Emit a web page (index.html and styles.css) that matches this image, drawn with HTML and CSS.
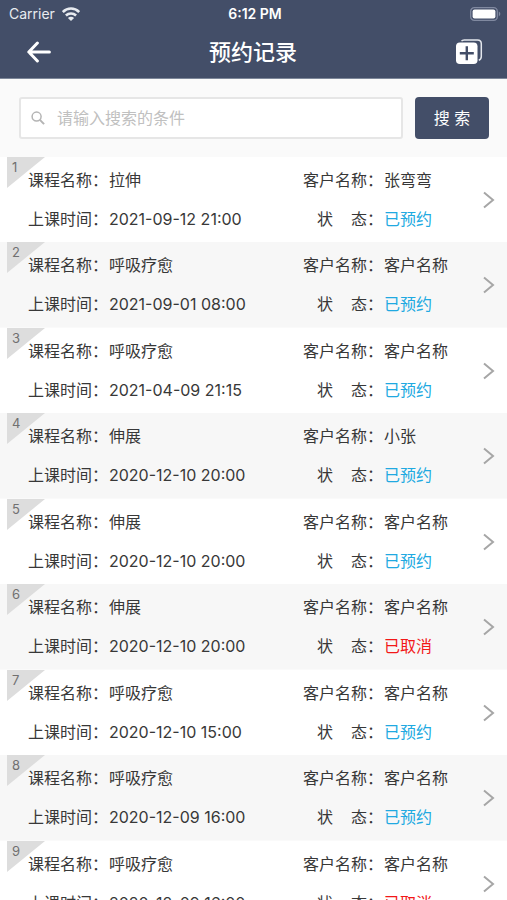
FILE: index.html
```html
<!DOCTYPE html>
<html lang="zh-CN">
<head>
<meta charset="utf-8">
<meta name="viewport" content="width=device-width, initial-scale=1">
<title>预约记录</title>
<link rel="stylesheet" href="styles.css">
</head>
<body>
<header class="top">
  <div class="status">
    <div class="carrier">
      <span>Carrier</span>
      <svg width="18" height="14" viewBox="0 0 18 14" fill="none" stroke="currentColor" stroke-width="2.6" aria-hidden="true">
        <path d="M.8 5C5.500.4 12.500.4 17.200 5M3.900 8.500c2.900-2.700 7.300-2.700 10.200 0"/>
        <path d="M9 14 5.900 11c1.800-1.600 4.400-1.600 6.200 0z" fill="currentColor" stroke="none"/>
      </svg>
    </div>
    <time class="clock">6:12 PM</time>
    <svg class="battery" width="31" height="14" viewBox="0 0 31 14" aria-hidden="true">
      <rect x=".7" y=".7" width="26.600" height="12.600" rx="3.600" fill="none" stroke="#8089a0" stroke-width="1.300"/>
      <rect x="2.600" y="2.400" width="22.800" height="9.200" rx="2" fill="#fff"/>
      <path d="M28.800 4.600c2 .9 2 3.900 0 4.800z" fill="#8089a0"/>
    </svg>
  </div>
  <nav class="bar">
    <button class="icon" type="button" aria-label="返回">
      <svg width="24" height="22" viewBox="0 0 24 22" fill="none" stroke="currentColor" stroke-width="3" stroke-linecap="round" stroke-linejoin="round">
        <path d="M10.400 2 1.800 11l8.600 9M2 11h20.400"/>
      </svg>
    </button>
    <h1>预约记录</h1>
    <button class="icon" type="button" aria-label="新增">
      <svg width="28" height="26" viewBox="0 0 28 26" fill="none">
        <path d="M6.500 2.200C7.100 1.300 8 1 9.200 1H22.500Q26.300 1 26.300 4.800V17.500C26.300 19.600 25.300 20.700 23.800 21.200" stroke="#e4e7ed" stroke-width="1.500"/>
        <rect x="1" y="3.500" width="21.500" height="21.500" rx="3.800" fill="#fff"/>
        <path d="M11.800 7.300v14M4.800 14.300h14" stroke="#434e68" stroke-width="2.400"/>
      </svg>
    </button>
  </nav>
</header>
<form class="search">
  <div class="field">
    <svg width="14" height="14" viewBox="0 0 14 14" fill="none" stroke="#b4b4b4" stroke-width="1.500" aria-hidden="true">
      <circle cx="5.600" cy="5.600" r="4.500"/><path d="m8.900 8.900 4.200 4.200" stroke-width="2"/>
    </svg>
    <input type="text" aria-label="搜索条件" placeholder="请输入搜索的条件">
  </div>
  <button class="submit" type="button">搜 索</button>
</form>
<main class="list" id="list"></main>
<script src="app.js"></script>
</body>
</html>
```
FILE: styles.css
```css
* { box-sizing: border-box; }

body {
  margin: 0;
  height: 100vh;
  display: flex;
  flex-direction: column;
  overflow: hidden;
  background: #fff;
  color: #383838;
  font: 16px/24px Inter, "Noto Sans CJK SC", sans-serif;
}

button, input { font: inherit; }

svg { display: block; flex: none; }

.top {
  flex: none;
  background: #434e68;
  color: #fff;
  border-bottom: 1px solid #7d8799;
}

.status {
  display: grid;
  grid-template-columns: 1fr auto 1fr;
  align-items: center;
  height: 27px;
  padding: 0 6px 0 9px;
  font-size: 14px;
  line-height: 27px;
}

.carrier {
  display: flex;
  align-items: center;
  gap: 7px;
  color: #e8ebf0;
}

.clock { font-weight: 600; }

.battery { justify-self: end; }

.bar {
  display: flex;
  align-items: center;
  justify-content: space-between;
  height: 51px;
  padding: 0 24px 2px 27px;
}

.icon {
  padding: 0;
  border: 0;
  background: none;
  color: inherit;
}

h1 {
  margin: 0;
  font-size: 22px;
  line-height: 32px;
  font-weight: 500;
}

.search {
  flex: none;
  display: flex;
  gap: 12px;
  padding: 18px 18px 18px 19px;
  background: #fafafa;
}

.field {
  flex: 1;
  display: flex;
  align-items: center;
  gap: 12px;
  height: 42px;
  padding: 0 10px;
  border: 2px solid #e6e6e6;
  border-radius: 3px;
  background: #fff;
}

.field input {
  flex: 1;
  min-width: 0;
  padding: 0;
  border: 0;
  outline: 0;
  background: none;
}

.field input::placeholder { color: #c0c0c0; opacity: 1; }

.submit {
  width: 74px;
  height: 42px;
  padding: 0;
  border: 0;
  border-radius: 4px;
  background: #434e68;
  color: #fff;
}

.list {
  flex: 1;
  min-height: 0;
  overflow-y: auto;
  scrollbar-width: none;
}

.row {
  position: relative;
  display: grid;
  grid-template-columns: minmax(0, 1fr) 180px 12px;
  align-items: center;
  padding: 11px 12px 11px 28px;
  color: inherit;
  text-decoration: none;
}

.row:nth-child(even) {
  background: #f7f7f7;
  border-bottom: 1px solid #fafafa;
}

.number {
  position: absolute;
  top: 0;
  left: 7px;
  width: 38px;
  height: 31px;
  padding-left: 5px;
  background: #ddd;
  clip-path: polygon(0 0, 100% 0, 0 100%);
  color: #707070;
  font-size: 13px;
  line-height: 20px;
}

.facts {
  display: grid;
  grid-template-columns: 81px minmax(0, 1fr);
  row-gap: 15px;
  margin: 0;
}

.facts dt { justify-self: end; padding-right: 1px; white-space: nowrap; }
.facts dd { margin: 0; white-space: nowrap; }
.spaced { display: flex; gap: 18px; }
.booked { color: #20a9e1; }
.cancelled { color: #f21818; }
```
FILE: app.js
```js
const records = [
  ["拉伸", "2021-09-12 21:00", "张弯弯", true],
  ["呼吸疗愈", "2021-09-01 08:00", "客户名称", true],
  ["呼吸疗愈", "2021-04-09 21:15", "客户名称", true],
  ["伸展", "2020-12-10 20:00", "小张", true],
  ["伸展", "2020-12-10 20:00", "客户名称", true],
  ["伸展", "2020-12-10 20:00", "客户名称", false],
  ["呼吸疗愈", "2020-12-10 15:00", "客户名称", true],
  ["呼吸疗愈", "2020-12-09 16:00", "客户名称", true],
  ["呼吸疗愈", "2020-12-09 16:00", "客户名称", false]
];

document.getElementById("list").innerHTML = records.map(([course, time, client, booked], i) => `
  <a class="row" href="#record-${i + 1}">
    <span class="number">${i + 1}</span>
    <dl class="facts">
      <dt>课程名称：</dt><dd>${course}</dd>
      <dt>上课时间：</dt><dd>${time}</dd>
    </dl>
    <dl class="facts">
      <dt>客户名称：</dt><dd>${client}</dd>
      <dt class="spaced"><span>状</span><span>态：</span></dt><dd class="${booked ? "booked" : "cancelled"}">${booked ? "已预约" : "已取消"}</dd>
    </dl>
    <svg width="12" height="18" viewBox="0 0 12 18" fill="none" stroke="#a6a6a6" stroke-width="2" aria-hidden="true"><path d="m1 1.500 9 7.500-9 7.500"/></svg>
  </a>`).join("");
```
